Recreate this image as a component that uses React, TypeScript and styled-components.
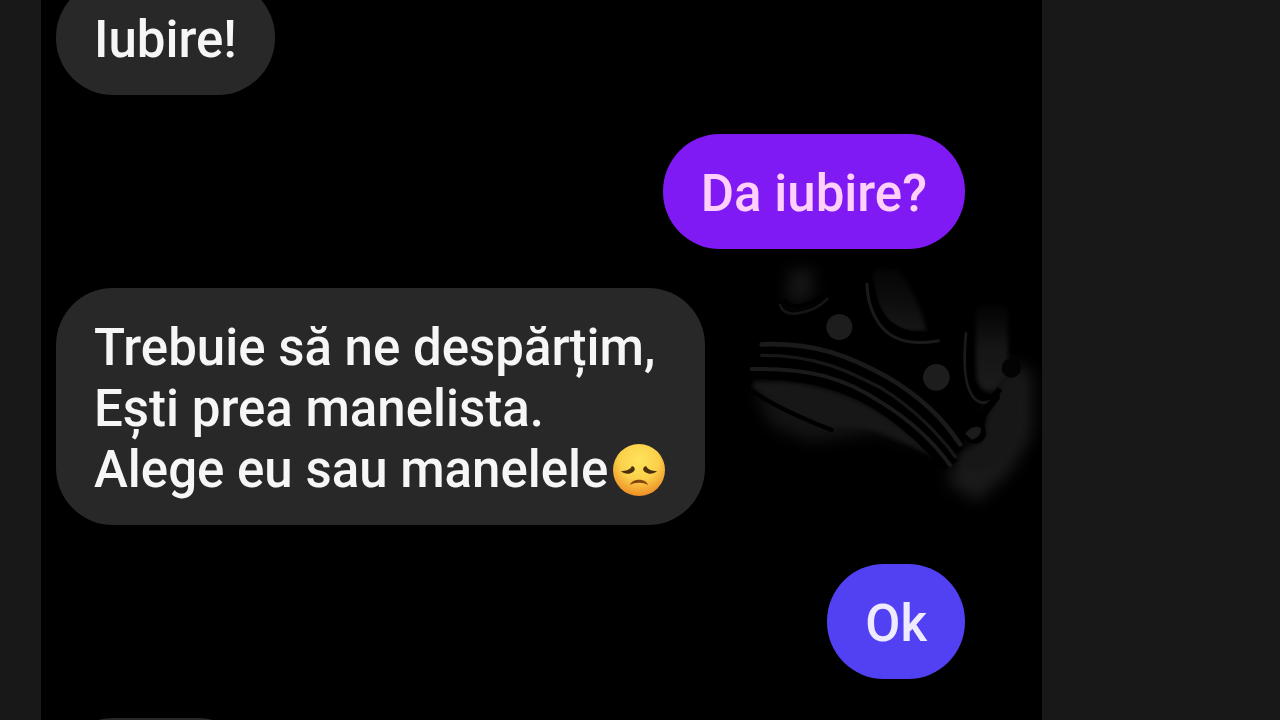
import React from "react";
import styled, { createGlobalStyle } from "styled-components";

const GlobalStyle = createGlobalStyle`
  * { box-sizing: border-box; }
  body {
    margin: 0;
    background: #181818;
    font-family: Roboto, "Noto Sans", sans-serif;
  }
`;

const Page = styled.div`
  display: grid;
  grid-template-columns: 41px minmax(0, 1fr) 238px;
  height: 100vh;
  overflow: hidden;
`;

const Chat = styled.main`
  position: relative;
  grid-column: 2;
  overflow: hidden;
  background: #000;
`;

const Thread = styled.ol`
  position: relative;
  display: flex;
  flex-direction: column;
  gap: 39px;
  margin: -20px 0 0;
  padding: 0 77px 0 15px;
  list-style: none;
`;

type Tone = "received" | "violet" | "indigo";

const tones: Record<Tone, { fill: string; ink: string }> = {
  received: { fill: "#282828", ink: "#f6f6f6" },
  violet: { fill: "#801af5", ink: "#ffd0fa" },
  indigo: { fill: "#5240f3", ink: "#eeeaff" },
};

const Bubble = styled.li<{ $tone: Tone }>`
  align-self: ${(p) => (p.$tone === "received" ? "flex-start" : "flex-end")};
  min-height: 115px;
  padding: 29px 38px 25px;
  border-radius: 57px;
  background: ${(p) => tones[p.$tone].fill};
  color: ${(p) => tones[p.$tone].ink};
  font-size: 51px;
  font-weight: 500;
  line-height: 61px;
`;

const EmptyBubble = styled(Bubble)`
  width: 199px;
`;

const Line = styled.span`
  display: flex;
  align-items: center;
  gap: 4px;
  white-space: nowrap;
`;

const Emoji = styled.svg`
  flex: none;
  width: 55px;
  height: 55px;
`;

const Artwork = styled.svg`
  position: absolute;
  top: 255px;
  right: 0;
  width: 312px;
  height: 265px;
`;

function SadFace() {
  return (
    <Emoji viewBox="0 0 55 55" role="img" aria-label="Disappointed face">
      <defs>
        <radialGradient id="face" cx="50%" cy="32%" r="68%">
          <stop offset="0" stopColor="#ffe45c" />
          <stop offset="0.55" stopColor="#fbd04a" />
          <stop offset="1" stopColor="#ee8f25" />
        </radialGradient>
      </defs>
      <circle cx="27" cy="28" r="26" fill="url(#face)" />
      <g fill="#4a300d">
        <path d="M9 29C14 29 18 28 20 24C23 25 24 28 21 30C17 33 12 32 9 29Z" />
        <path d="M45 29C40 29 36 28 34 24C31 25 30 28 33 30C37 33 42 32 45 29Z" />
        <path d="M18 43C20 36 34 36 36 43C31 40 23 40 18 43Z" fill="#874510" />
      </g>
    </Emoji>
  );
}

function Crown() {
  return (
    <Artwork viewBox="0 0 936 795" aria-hidden="true">
      <defs>
        <linearGradient id="fadeUp" gradientUnits="userSpaceOnUse" x1="0" y1="420" x2="0" y2="130">
          <stop offset="0" stopColor="#1c1c1c" />
          <stop offset="0.5" stopColor="#151515" />
          <stop offset="1" stopColor="#141414" stopOpacity="0" />
        </linearGradient>
        <linearGradient id="fadePeak" gradientUnits="userSpaceOnUse" x1="470" y1="230" x2="500" y2="20">
          <stop offset="0" stopColor="#191919" />
          <stop offset="1" stopColor="#0a0a0a" stopOpacity="0.4" />
        </linearGradient>
        <filter id="soft" x="-40%" y="-40%" width="180%" height="180%" colorInterpolationFilters="sRGB">
          <feGaussianBlur stdDeviation="22" />
        </filter>
        <filter id="edge" x="-20%" y="-20%" width="140%" height="140%" colorInterpolationFilters="sRGB">
          <feGaussianBlur stdDeviation="7" />
        </filter>
      </defs>

      <g filter="url(#soft)">
        <path d="M175 50L245 40 250 120Q215 150 175 140Z" fill="#161616" />
        <path d="M835 320L905 350 905 540 840 650 740 740 650 680 690 600 770 540 780 450Z" fill="#1a1a1a" />
        <path d="M75 400L280 410 430 475 560 570 440 530 240 560 120 510Z" fill="#131313" />
      </g>

      <g filter="url(#edge)">
        <path d="M430 45Q432 150 475 200Q520 240 590 225Q565 130 505 45Z" fill="url(#fadePeak)" />
        <path d="M740 150Q735 300 740 370Q750 412 782 408Q810 400 835 350L832 150Z" fill="url(#fadeUp)" />
        <path d="M70 380C210 372 345 405 460 480C535 530 590 575 630 615Q540 570 445 530Q370 508 290 520Q170 475 70 400Z" fill="#171717" />
        <path d="M835 370L870 380 860 560 770 650 690 640 700 590Q745 580 770 545Q760 485 805 445Z" fill="#171717" />
      </g>

      <g fill="none" stroke="#000">
        <path d="M70 410Q150 465 305 525" strokeWidth="13" strokeLinecap="round" />
        <path d="M60 360C235 355 370 400 475 475C550 528 600 580 650 640" strokeWidth="25" />
        <path d="M100 284C260 280 360 325 465 383C555 435 635 510 685 590" strokeWidth="30" />
        <path d="M100 320C250 316 350 360 455 420C545 475 620 545 672 625" strokeWidth="26" />
        <path d="M160 135Q180 157 210 153Q250 145 275 125" strokeWidth="12" />
        <path d="M424 80Q428 155 475 203Q525 249 620 236" strokeWidth="15" />
        <path d="M722 230Q715 335 727 382Q742 430 775 427Q795 424 810 402" strokeWidth="17" />
      </g>

      <g fill="none" stroke="#1a1a1a" strokeLinecap="round">
        <path d="M95 268C260 262 360 305 470 365C565 420 640 490 690 568" strokeWidth="14" />
        <path d="M95 301C255 300 350 345 455 400C545 455 625 535 676 605" stroke="#171717" strokeWidth="10" />
        <path d="M65 342C240 338 345 370 450 440C540 495 610 560 660 630" strokeWidth="12" />
        <path d="M150 150Q160 178 195 176Q255 170 292 132" stroke="#151515" strokeWidth="8" />
        <path d="M411 88Q413 165 456 217Q510 279 625 257" strokeWidth="9" />
        <path d="M708 235Q698 340 713 392Q730 443 760 443Q785 443 803 425" strokeWidth="8" />
      </g>

      <path d="M808 410L765 450 700 540Q713 570 740 566Q770 560 768 529Q757 510 772 478L810 430Z" fill="#000" />
      <path d="M705 535L722 520Q745 508 754 522Q752 548 725 554Z" fill="#1b1b1b" />
      <circle cx="328" cy="216" r="39" fill="#1d1d1d" />
      <circle cx="619" cy="367" r="40" fill="#1d1d1d" />
      <circle cx="844" cy="339" r="29" fill="#030303" />
    </Artwork>
  );
}

export default function App() {
  return (
    <>
      <GlobalStyle />
      <Page>
        <Chat>
          <Crown />
          <Thread>
            <Bubble $tone="received">Iubire!</Bubble>
            <Bubble $tone="violet">Da iubire?</Bubble>
            <Bubble $tone="received">
              <Line>Trebuie să ne despărțim,</Line>
              <Line>Ești prea manelista.</Line>
              <Line>
                Alege eu sau manelele
                <SadFace />
              </Line>
            </Bubble>
            <Bubble $tone="indigo">Ok</Bubble>
            <EmptyBubble $tone="received" />
          </Thread>
        </Chat>
      </Page>
    </>
  );
}
